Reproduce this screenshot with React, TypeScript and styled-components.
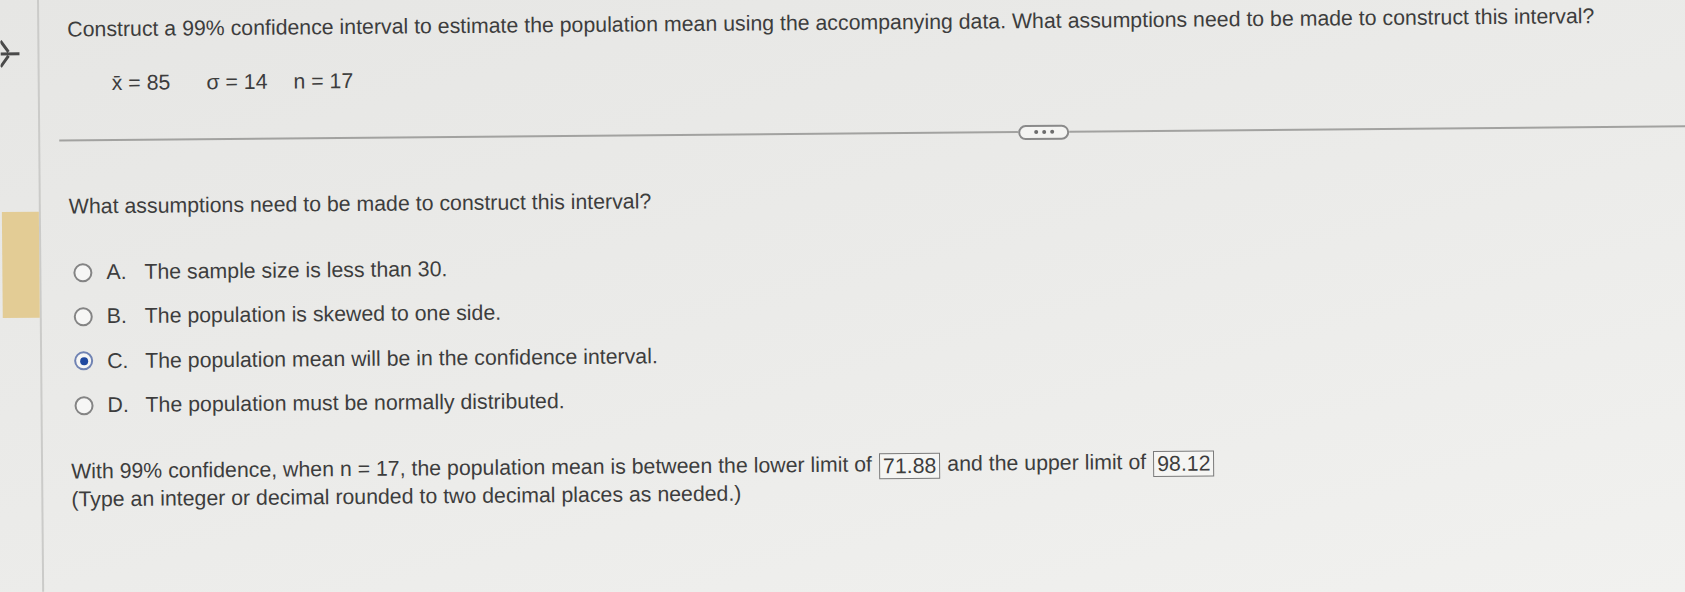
import React from 'react';
import styled, { createGlobalStyle } from 'styled-components';

const GlobalStyle = createGlobalStyle`
  html, body {
    margin: 0;
    padding: 0;
  }
  body {
    background: linear-gradient(165deg, #e6e6e4 0%, #ebebe9 50%, #f1f1ef 100%);
    font-family: 'Liberation Sans', Arial, sans-serif;
    color: #3d3d3d;
    overflow: hidden;
  }
`;

// the photo is taken slightly askew, so the whole sheet is turned a little
const Page = styled.div`
  display: flex;
  width: 1685px;
  height: 592px;
  transform: rotate(-0.5deg);
  transform-origin: 0 0;
`;

const Sidebar = styled.aside`
  width: 37px;
  flex: none;
  border-right: 2px solid #cbcbc9;
  display: flex;
  flex-direction: column;
  padding-top: 38px;
`;

const BackArrow = styled.svg`
  width: 22px;
  height: 30px;
  display: block;
`;

const Marker = styled.div`
  margin-top: 144px;
  height: 106px;
  background: #e3cc95;
`;

const Main = styled.main`
  flex: 1;
  display: flex;
  flex-direction: column;
  padding: 18px 0 0 28px;
  font-size: 21.3px;
  line-height: 24px;
`;

const Title = styled.div`
  white-space: nowrap;
`;

const Params = styled.div`
  display: flex;
  margin-top: 30px;
  padding-left: 44px;
`;

const Param = styled.span<{ $gap: number }>`
  margin-right: ${({ $gap }) => $gap}px;
  white-space: nowrap;
`;

const Divider = styled.div`
  display: flex;
  align-items: center;
  margin: 38px 0 0 -9px;
  height: 14px;
`;

const Rule = styled.div<{ $width?: number }>`
  height: 2px;
  background: #a2a2a0;
  ${({ $width }) => ($width ? `width: ${$width}px; flex: none;` : 'flex: 1;')}
`;

const MoreButton = styled.div`
  width: 47px;
  height: 11px;
  border: 2px solid #8a8a8a;
  border-radius: 8px;
  background: #f4f4f2;
  display: flex;
  align-items: center;
  justify-content: center;
  gap: 4px;
  flex: none;
`;

const Dot = styled.span`
  width: 4px;
  height: 4px;
  border-radius: 50%;
  background: #6d6d6d;
`;

const Question = styled.div`
  margin-top: 47px;
`;

const Options = styled.div`
  margin-top: 32px;
  display: flex;
  flex-direction: column;
`;

const Option = styled.div`
  height: 44.3px;
  display: flex;
  align-items: center;
  padding-left: 4px;
`;

const Radio = styled.span<{ $checked?: boolean }>`
  width: 19px;
  height: 19px;
  box-sizing: border-box;
  border-radius: 50%;
  border: ${({ $checked }) => ($checked ? '2.5px solid #7083b3' : '2px solid #848484')};
  background: #f6f6f5;
  display: flex;
  align-items: center;
  justify-content: center;
  flex: none;
  &::after {
    content: '';
    display: ${({ $checked }) => ($checked ? 'block' : 'none')};
    width: 8px;
    height: 8px;
    border-radius: 50%;
    background: #2049a0;
  }
`;

const Letter = styled.span`
  width: 38px;
  margin-left: 14px;
  flex: none;
`;

const Answer = styled.div`
  margin-top: 31px;
  line-height: 26px;
`;

const AnswerBox = styled.span`
  display: inline-block;
  border: 1px solid #7a7a7a;
  padding: 0 3px;
  line-height: 24px;
  margin: 0 7px;
  vertical-align: middle;
  background: #f5f5f3;
`;

const options = [
  { letter: 'A.', text: 'The sample size is less than 30.' },
  { letter: 'B.', text: 'The population is skewed to one side.' },
  { letter: 'C.', text: 'The population mean will be in the confidence interval.', checked: true },
  { letter: 'D.', text: 'The population must be normally distributed.' },
];

export default function App() {
  return (
    <>
      <GlobalStyle />
      <Page>
        <Sidebar>
          <BackArrow viewBox="0 0 22 30">
            <path d="M0 3 L8 14 M0 16 H19 M8 18 L0 29" stroke="#4a4a4a" strokeWidth="3" fill="none" />
          </BackArrow>
          <Marker />
        </Sidebar>
        <Main>
          <Title>
            Construct a 99% confidence interval to estimate the population mean using the accompanying data. What
            assumptions need to be made to construct this interval?
          </Title>
          <Params>
            <Param $gap={36}>x̄ = 85</Param>
            <Param $gap={26}>σ = 14</Param>
            <Param $gap={0}>n = 17</Param>
          </Params>
          <Divider>
            <Rule $width={959} />
            <MoreButton>
              <Dot />
              <Dot />
              <Dot />
            </MoreButton>
            <Rule />
          </Divider>
          <Question>What assumptions need to be made to construct this interval?</Question>
          <Options>
            {options.map((o) => (
              <Option key={o.letter}>
                <Radio $checked={o.checked} />
                <Letter>{o.letter}</Letter>
                <span>{o.text}</span>
              </Option>
            ))}
          </Options>
          <Answer>
            <div>
              With 99% confidence, when n = 17, the population mean is between the lower limit of
              <AnswerBox>71.88</AnswerBox>
              and the upper limit of
              <AnswerBox>98.12</AnswerBox>
            </div>
            <div>(Type an integer or decimal rounded to two decimal places as needed.)</div>
          </Answer>
        </Main>
      </Page>
    </>
  );
}
